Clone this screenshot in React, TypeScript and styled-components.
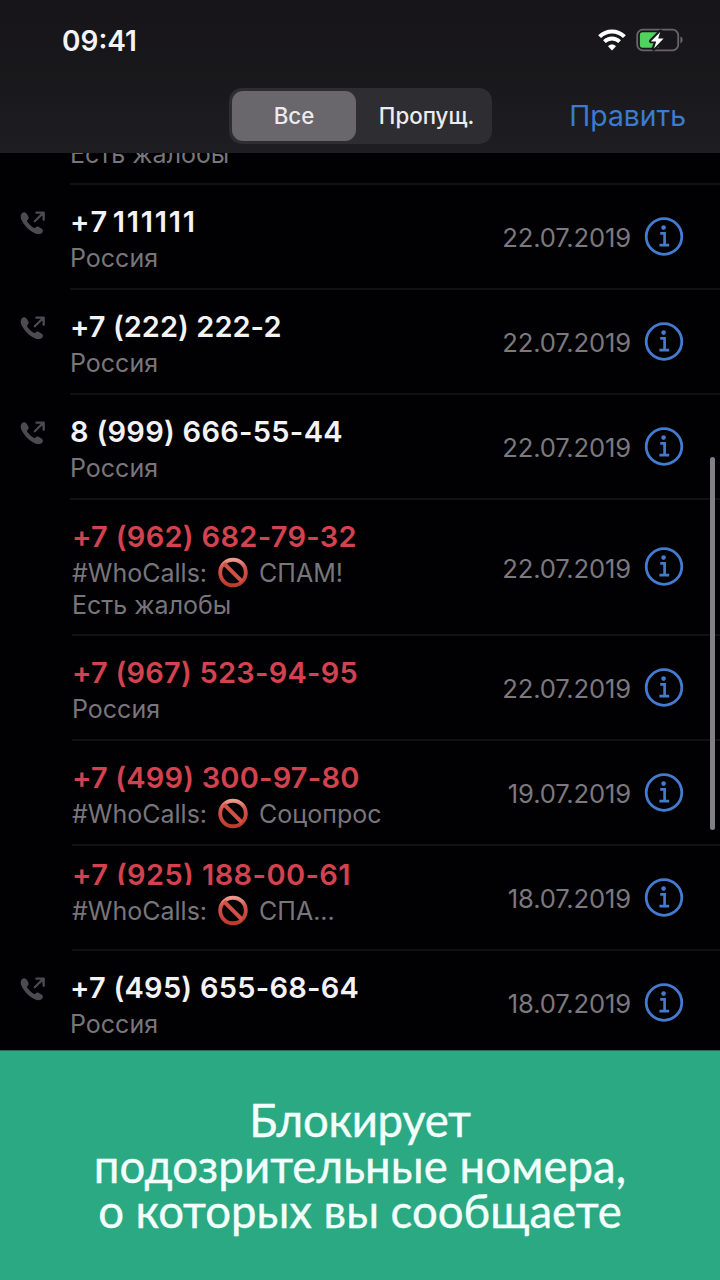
import React from "react";
import styled, { createGlobalStyle } from "styled-components";

const GlobalStyle = createGlobalStyle`
  * { box-sizing: border-box; }
  body {
    margin: 0;
    background: #000;
    font-family: Inter, "Liberation Sans", sans-serif;
  }
`;

const Screen = styled.div`
  display: flex;
  flex-direction: column;
  width: 720px;
  height: 1280px;
  overflow: hidden;
  background: #010003;
`;

const Header = styled.header`
  flex: none;
  height: 153px;
  background: linear-gradient(#171519, #18171a 45%, #1e1d21);
`;

const StatusBar = styled.div`
  display: flex;
  align-items: center;
  justify-content: space-between;
  height: 88px;
  padding: 0 36px 8px 62px;
`;

const Clock = styled.span`
  padding-top: 2px;
  font-size: 28px;
  font-weight: 600;
  line-height: 34px;
  color: #f4f3f5;
`;

const StatusIcons = styled.div`
  display: flex;
  align-items: center;
  gap: 10px;
`;

const NavBar = styled.nav`
  display: grid;
  grid-template-columns: 229px 263px 1fr;
  align-items: center;
  height: 56px;
`;

const Segments = styled.div`
  grid-column: 2;
  display: flex;
  height: 56px;
  padding: 3px;
  border-radius: 13px;
  background: #2e2d31;
`;

const Segment = styled.button<{ $active?: boolean }>`
  flex: ${(p) => (p.$active ? "0 0 124px" : "1")};
  padding: 0 0 1px ${(p) => (p.$active ? 0 : 8)}px;
  border: 0;
  border-radius: 11px;
  background: ${(p) => (p.$active ? "#69666c" : "transparent")};
  font: 500 22.3px Inter, "Liberation Sans", sans-serif;
  color: #ecebee;
`;

const EditButton = styled.button`
  justify-self: end;
  padding: 0;
  margin-right: 34px;
  border: 0;
  background: none;
  font: 400 28.3px Inter, "Liberation Sans", sans-serif;
  color: #3c7bd0;
`;

const CallList = styled.main`
  position: relative;
  flex: 1;
  min-height: 0;
  overflow: hidden;
`;

const ScrolledContent = styled.div`
  margin-top: -104px;
`;

const Row = styled.div<{ $tall?: boolean }>`
  display: flex;
  height: ${(p) => (p.$tall ? 136 : 105)}px;
`;

const IconColumn = styled.div<{ $spam?: boolean }>`
  flex: none;
  width: ${(p) => (p.$spam ? 72 : 70)}px;
  padding: 26px 0 0 20px;
`;

const RowBody = styled.div`
  flex: 1;
  display: flex;
  justify-content: space-between;
  min-width: 0;
  border-bottom: 2px solid #111013;
`;

const Texts = styled.div<{ $raised?: boolean }>`
  padding-top: ${(p) => (p.$raised ? 11 : 19)}px;
  white-space: nowrap;
`;

const PhoneNumber = styled.div<{ $spam?: boolean; $spacing: number; $wordSpacing?: number; $cut?: boolean }>`
  height: ${(p) => (p.$cut ? 28 : 36)}px;
  margin-bottom: ${(p) => (p.$cut ? 10 : 2)}px;
  overflow: ${(p) => (p.$cut ? "hidden" : "visible")};
  font-size: 29px;
  font-weight: 600;
  line-height: 36px;
  letter-spacing: ${(p) => p.$spacing}px;
  word-spacing: ${(p) => p.$wordSpacing ?? 0}px;
  color: ${(p) => (p.$spam ? "#d2424f" : "#f3f2f4")};
`;

const Note = styled.div`
  display: flex;
  align-items: center;
  height: 32px;
  font-size: 25px;
  line-height: 32px;
  color: #78767a;
`;

const Meta = styled.div`
  display: flex;
  align-items: center;
  gap: 13px;
  padding-right: 36px;
`;

const CallDate = styled.span`
  padding-top: 3px;
  font-size: 25.6px;
  line-height: 32px;
  letter-spacing: -0.15px;
  color: #7b797d;
`;

const ScrollThumb = styled.div`
  position: absolute;
  top: 304px;
  right: 5px;
  width: 5px;
  height: 373px;
  border-radius: 3px;
  background: #828084;
`;

const Banner = styled.footer`
  flex: none;
  height: 230px;
  padding-top: 46px;
  border-top: 1px solid #2c6b58;
  background: #2aa983;
  font-family: Lato, "Noto Sans", sans-serif;
  font-size: 45.5px;
  line-height: 45.5px;
  text-align: center;
  color: #f2fffb;
  -webkit-text-stroke: 0.4px #f2fffb;
`;

const BannerLine = styled.div<{ $spacing?: number }>`
  letter-spacing: ${(p) => p.$spacing ?? 0}px;
  white-space: nowrap;
`;

const BanSvg = styled.svg`
  flex: none;
  margin: 0 10px 0 10px;
`;

const WifiIcon = () => (
  <svg width="28" height="22" viewBox="0 0 28 22" fill="none" stroke="#fff">
    <path d="M1.6 7.6C8.6.8 19.4.8 26.4 7.6" strokeWidth="4.1" />
    <path d="M6.4 12.6C10.8 8.5 17.2 8.5 21.6 12.6" strokeWidth="3.9" />
    <path d="M14 21.4L10 17.2C12.2 15 15.8 15 18 17.2Z" fill="#fff" stroke="none" />
  </svg>
);

const BatteryIcon = () => (
  <svg width="48" height="24" viewBox="0 0 48 24" fill="none">
    <rect x="1.2" y="1.7" width="41" height="20.6" rx="5.5" stroke="#67656a" strokeWidth="1.8" />
    <path d="M44.4 8.6C47.4 9.6 47.4 14.4 44.4 15.4Z" fill="#67656a" />
    <path d="M6.5 4.3H22.5V19.7H6.5A2.6 2.6 0 0 1 3.9 17.1V6.9A2.6 2.6 0 0 1 6.5 4.3Z" fill="#4fd35e" />
    <path
      d="M24.6 3.4L15 13.2H20.4L17.6 20.8L27.6 10.8H22.2Z"
      fill="#fff"
      stroke="#19181b"
      strokeWidth="4"
      strokeLinejoin="round"
    />
    <path d="M24.2 4L14.8 13.6H20.2L18 20.4L27.6 10.6H22.2Z" fill="#fff" />
  </svg>
);

const OutgoingIcon = () => (
  <svg width="26" height="25" viewBox="0 0 26 25" fill="none">
    <path
      d="M1.9 2.2C3.4.6 5.4.9 6.7 2.8L8.2 5.2C9 6.6 8.7 7.7 7.7 8.7C6.9 9.5 6.9 10.1 7.5 11.1C8.9 13.3 10.9 15.2 13.2 16.6C14.1 17.2 14.8 17.1 15.5 16.4C16.6 15.3 17.7 15.1 18.9 15.9L21.5 17.6C23.2 18.8 23.5 20.4 22.1 21.8C19.9 24 16.6 23.6 12.8 21.3C8.6 18.7 4.9 14.9 2.4 10.7C.3 7.2 0 4.2 1.9 2.2Z"
      fill="#4d4b50"
    />
    <path d="M14.8 10.2L23.4 1.8M16.4 1.7H23.7V8.8" stroke="#4d4b50" strokeWidth="2.3" strokeLinecap="round" strokeLinejoin="round" />
  </svg>
);

const InfoIcon = () => (
  <svg width="40" height="40" viewBox="0 0 40 40" fill="none" stroke="#437bd0">
    <circle cx="20" cy="19.5" r="17.8" strokeWidth="2.8" />
    <circle cx="19.6" cy="10.6" r="2.3" fill="#437bd0" stroke="none" />
    <path d="M16.2 16.4H20.6V28.2M15.4 28.2H25.2" strokeWidth="2.7" />
  </svg>
);

const BanIcon = () => (
  <BanSvg width="32" height="32" viewBox="0 0 32 32" fill="none" role="img" aria-label="Запрещено">
    <defs>
      <linearGradient id="ban" x1="0" y1="0" x2="0" y2="1">
        <stop offset="0" stopColor="#ec9a8d" />
        <stop offset="0.3" stopColor="#d0574b" />
        <stop offset="1" stopColor="#c23a2c" />
      </linearGradient>
    </defs>
    <circle cx="16" cy="15.5" r="12.8" stroke="url(#ban)" strokeWidth="3.9" />
    <path d="M7 6.5L25 24.5" stroke="#cf5245" strokeWidth="3.9" />
  </BanSvg>
);

type Call = {
  number: string;
  spacing: number;
  wordSpacing?: number;
  date: string;
  spam?: boolean;
  label?: string;
  note?: string;
  cut?: boolean;
};

const calls: Call[] = [
  { number: "+7 111111", spacing: 1.7, wordSpacing: -5, date: "22.07.2019", note: "Россия" },
  { number: "+7 (222) 222-2", spacing: 0.04, date: "22.07.2019", note: "Россия" },
  { number: "8 (999) 666-55-44", spacing: 0.27, date: "22.07.2019", note: "Россия" },
  { number: "+7 (962) 682-79-32", spacing: 0.3, date: "22.07.2019", spam: true, label: "СПАМ!", note: "Есть жалобы" },
  { number: "+7 (967) 523-94-95", spacing: 0.22, date: "22.07.2019", spam: true, note: "Россия" },
  { number: "+7 (499) 300-97-80", spacing: 0.18, date: "19.07.2019", spam: true, label: "Соцопрос" },
  { number: "+7 (925) 188-00-61", spacing: 0.38, date: "18.07.2019", spam: true, label: "СПА...", cut: true },
  { number: "+7 (495) 655-68-64", spacing: 0.24, date: "18.07.2019", note: "Россия" },
];

const CallRow = ({ call }: { call: Call }) => (
  <Row $tall={Boolean(call.label && call.note)}>
    <IconColumn $spam={call.spam}>{!call.spam && <OutgoingIcon />}</IconColumn>
    <RowBody>
      <Texts $raised={call.cut}>
        <PhoneNumber $spam={call.spam} $spacing={call.spacing} $wordSpacing={call.wordSpacing} $cut={call.cut}>
          {call.number}
        </PhoneNumber>
        {call.label && (
          <Note>
            #WhoCalls:
            <BanIcon />
            {call.label}
          </Note>
        )}
        {call.note && <Note>{call.note}</Note>}
      </Texts>
      <Meta>
        <CallDate>{call.date}</CallDate>
        <InfoIcon />
      </Meta>
    </RowBody>
  </Row>
);

const ScrolledBody = styled(RowBody)`
  align-items: flex-end;
  padding-bottom: 13px;
`;

export default function App() {
  return (
    <Screen>
      <GlobalStyle />
      <Header>
        <StatusBar>
          <Clock>09:41</Clock>
          <StatusIcons>
            <WifiIcon />
            <BatteryIcon />
          </StatusIcons>
        </StatusBar>
        <NavBar>
          <Segments>
            <Segment $active>Все</Segment>
            <Segment>Пропущ.</Segment>
          </Segments>
          <EditButton>Править</EditButton>
        </NavBar>
      </Header>
      <CallList>
        <ScrolledContent>
          <Row $tall>
            <IconColumn />
            <ScrolledBody>
              <Note>Есть жалобы</Note>
            </ScrolledBody>
          </Row>
          {calls.map((call) => (
            <CallRow key={call.number} call={call} />
          ))}
        </ScrolledContent>
        <ScrollThumb />
      </CallList>
      <Banner>
        <BannerLine $spacing={-0.3}>Блокирует</BannerLine>
        <BannerLine $spacing={0.1}>подозрительные номера,</BannerLine>
        <BannerLine>о которых вы сообщаете</BannerLine>
      </Banner>
    </Screen>
  );
}
